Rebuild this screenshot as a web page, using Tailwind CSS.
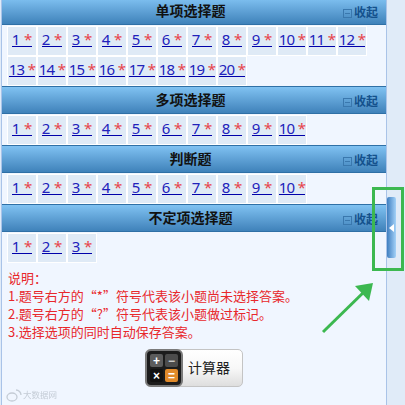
<!DOCTYPE html>
<html lang="zh-CN">
<head>
    <meta charset="UTF-8">
    <title>答题卡</title>
    <script src="https://cdn.jsdelivr.net/npm/@tailwindcss/browser@4"></script>
</head>
<body class="bg-[#e0ebf8] font-['Liberation_Sans','Noto_Sans_CJK_SC',sans-serif]">
<div class="relative w-[405px] h-[405px] overflow-hidden">
    <div class="w-[386px] h-[405px] overflow-hidden border-l border-r border-[#a9c3e8] bg-[#f0f6ff] ml-px">

        <!-- 单项选择题 -->
        <div class="relative -mt-[3px] h-[28px] flex items-center justify-center bg-gradient-to-b from-[#80c2f2] to-[#3f82ba] border-t border-b border-[#2f70a6] pr-[7px]">
            <span class="text-[14px] font-bold text-[#111]">单项选择题</span>
            <span class="absolute right-[8px] top-[6px] flex items-center text-[12px] font-bold text-[#14518c]"><span class="w-[9px] h-[9px] border border-[#3a78ae] mr-[2px] flex items-center justify-center"><span class="w-[5px] h-px bg-[#3a78ae]"></span></span>收起</span>
        </div>
        <div class="flex flex-wrap w-[364px] ml-[5px] mt-px">
            <div class="w-[30px] h-[30px] border border-white bg-[#dfeaf6] flex items-center justify-center text-[15px] font-['Noto_Sans'] text-[#2222bb]"><a class="border-b border-[#0000aa] leading-[14px] h-[15px] mb-[3px] whitespace-nowrap">1 <span class="text-[#e8434a]">*</span></a></div>
            <div class="w-[30px] h-[30px] border border-white bg-[#dfeaf6] flex items-center justify-center text-[15px] font-['Noto_Sans'] text-[#2222bb]"><a class="border-b border-[#0000aa] leading-[14px] h-[15px] mb-[3px] whitespace-nowrap">2 <span class="text-[#e8434a]">*</span></a></div>
            <div class="w-[30px] h-[30px] border border-white bg-[#dfeaf6] flex items-center justify-center text-[15px] font-['Noto_Sans'] text-[#2222bb]"><a class="border-b border-[#0000aa] leading-[14px] h-[15px] mb-[3px] whitespace-nowrap">3 <span class="text-[#e8434a]">*</span></a></div>
            <div class="w-[30px] h-[30px] border border-white bg-[#dfeaf6] flex items-center justify-center text-[15px] font-['Noto_Sans'] text-[#2222bb]"><a class="border-b border-[#0000aa] leading-[14px] h-[15px] mb-[3px] whitespace-nowrap">4 <span class="text-[#e8434a]">*</span></a></div>
            <div class="w-[30px] h-[30px] border border-white bg-[#dfeaf6] flex items-center justify-center text-[15px] font-['Noto_Sans'] text-[#2222bb]"><a class="border-b border-[#0000aa] leading-[14px] h-[15px] mb-[3px] whitespace-nowrap">5 <span class="text-[#e8434a]">*</span></a></div>
            <div class="w-[30px] h-[30px] border border-white bg-[#dfeaf6] flex items-center justify-center text-[15px] font-['Noto_Sans'] text-[#2222bb]"><a class="border-b border-[#0000aa] leading-[14px] h-[15px] mb-[3px] whitespace-nowrap">6 <span class="text-[#e8434a]">*</span></a></div>
            <div class="w-[30px] h-[30px] border border-white bg-[#dfeaf6] flex items-center justify-center text-[15px] font-['Noto_Sans'] text-[#2222bb]"><a class="border-b border-[#0000aa] leading-[14px] h-[15px] mb-[3px] whitespace-nowrap">7 <span class="text-[#e8434a]">*</span></a></div>
            <div class="w-[30px] h-[30px] border border-white bg-[#dfeaf6] flex items-center justify-center text-[15px] font-['Noto_Sans'] text-[#2222bb]"><a class="border-b border-[#0000aa] leading-[14px] h-[15px] mb-[3px] whitespace-nowrap">8 <span class="text-[#e8434a]">*</span></a></div>
            <div class="w-[30px] h-[30px] border border-white bg-[#dfeaf6] flex items-center justify-center text-[15px] font-['Noto_Sans'] text-[#2222bb]"><a class="border-b border-[#0000aa] leading-[14px] h-[15px] mb-[3px] whitespace-nowrap">9 <span class="text-[#e8434a]">*</span></a></div>
            <div class="w-[30px] h-[30px] border border-white bg-[#dfeaf6] flex items-center justify-center text-[15px] font-['Noto_Sans'] text-[#2222bb]"><a class="border-b border-[#0000aa] leading-[14px] h-[15px] mb-[3px] whitespace-nowrap tracking-[-0.7px]">10 <span class="text-[#e8434a]">*</span></a></div>
            <div class="w-[30px] h-[30px] border border-white bg-[#dfeaf6] flex items-center justify-center text-[15px] font-['Noto_Sans'] text-[#2222bb]"><a class="border-b border-[#0000aa] leading-[14px] h-[15px] mb-[3px] whitespace-nowrap tracking-[-0.7px]">11 <span class="text-[#e8434a]">*</span></a></div>
            <div class="w-[30px] h-[30px] border border-white bg-[#dfeaf6] flex items-center justify-center text-[15px] font-['Noto_Sans'] text-[#2222bb]"><a class="border-b border-[#0000aa] leading-[14px] h-[15px] mb-[3px] whitespace-nowrap tracking-[-0.7px]">12 <span class="text-[#e8434a]">*</span></a></div>
            <div class="w-[30px] h-[30px] border border-white bg-[#dfeaf6] flex items-center justify-center text-[15px] font-['Noto_Sans'] text-[#2222bb]"><a class="border-b border-[#0000aa] leading-[14px] h-[15px] mb-[3px] whitespace-nowrap tracking-[-0.7px]">13 <span class="text-[#e8434a]">*</span></a></div>
            <div class="w-[30px] h-[30px] border border-white bg-[#dfeaf6] flex items-center justify-center text-[15px] font-['Noto_Sans'] text-[#2222bb]"><a class="border-b border-[#0000aa] leading-[14px] h-[15px] mb-[3px] whitespace-nowrap tracking-[-0.7px]">14 <span class="text-[#e8434a]">*</span></a></div>
            <div class="w-[30px] h-[30px] border border-white bg-[#dfeaf6] flex items-center justify-center text-[15px] font-['Noto_Sans'] text-[#2222bb]"><a class="border-b border-[#0000aa] leading-[14px] h-[15px] mb-[3px] whitespace-nowrap tracking-[-0.7px]">15 <span class="text-[#e8434a]">*</span></a></div>
            <div class="w-[30px] h-[30px] border border-white bg-[#dfeaf6] flex items-center justify-center text-[15px] font-['Noto_Sans'] text-[#2222bb]"><a class="border-b border-[#0000aa] leading-[14px] h-[15px] mb-[3px] whitespace-nowrap tracking-[-0.7px]">16 <span class="text-[#e8434a]">*</span></a></div>
            <div class="w-[30px] h-[30px] border border-white bg-[#dfeaf6] flex items-center justify-center text-[15px] font-['Noto_Sans'] text-[#2222bb]"><a class="border-b border-[#0000aa] leading-[14px] h-[15px] mb-[3px] whitespace-nowrap tracking-[-0.7px]">17 <span class="text-[#e8434a]">*</span></a></div>
            <div class="w-[30px] h-[30px] border border-white bg-[#dfeaf6] flex items-center justify-center text-[15px] font-['Noto_Sans'] text-[#2222bb]"><a class="border-b border-[#0000aa] leading-[14px] h-[15px] mb-[3px] whitespace-nowrap tracking-[-0.7px]">18 <span class="text-[#e8434a]">*</span></a></div>
            <div class="w-[30px] h-[30px] border border-white bg-[#dfeaf6] flex items-center justify-center text-[15px] font-['Noto_Sans'] text-[#2222bb]"><a class="border-b border-[#0000aa] leading-[14px] h-[15px] mb-[3px] whitespace-nowrap tracking-[-0.7px]">19 <span class="text-[#e8434a]">*</span></a></div>
            <div class="w-[30px] h-[30px] border border-white bg-[#dfeaf6] flex items-center justify-center text-[15px] font-['Noto_Sans'] text-[#2222bb]"><a class="border-b border-[#0000aa] leading-[14px] h-[15px] mb-[3px] whitespace-nowrap tracking-[-0.7px]">20 <span class="text-[#e8434a]">*</span></a></div>
        </div>

        <!-- 多项选择题 -->
        <div class="relative h-[28px] flex items-center justify-center bg-gradient-to-b from-[#80c2f2] to-[#3f82ba] border-t border-b border-[#2f70a6] pr-[7px]">
            <span class="text-[14px] font-bold text-[#111]">多项选择题</span>
            <span class="absolute right-[8px] top-[6px] flex items-center text-[12px] font-bold text-[#14518c]"><span class="w-[9px] h-[9px] border border-[#3a78ae] mr-[2px] flex items-center justify-center"><span class="w-[5px] h-px bg-[#3a78ae]"></span></span>收起</span>
        </div>
        <div class="flex flex-wrap w-[364px] ml-[5px] mt-px">
            <div class="w-[30px] h-[30px] border border-white bg-[#dfeaf6] flex items-center justify-center text-[15px] font-['Noto_Sans'] text-[#2222bb]"><a class="border-b border-[#0000aa] leading-[14px] h-[15px] mb-[3px] whitespace-nowrap">1 <span class="text-[#e8434a]">*</span></a></div>
            <div class="w-[30px] h-[30px] border border-white bg-[#dfeaf6] flex items-center justify-center text-[15px] font-['Noto_Sans'] text-[#2222bb]"><a class="border-b border-[#0000aa] leading-[14px] h-[15px] mb-[3px] whitespace-nowrap">2 <span class="text-[#e8434a]">*</span></a></div>
            <div class="w-[30px] h-[30px] border border-white bg-[#dfeaf6] flex items-center justify-center text-[15px] font-['Noto_Sans'] text-[#2222bb]"><a class="border-b border-[#0000aa] leading-[14px] h-[15px] mb-[3px] whitespace-nowrap">3 <span class="text-[#e8434a]">*</span></a></div>
            <div class="w-[30px] h-[30px] border border-white bg-[#dfeaf6] flex items-center justify-center text-[15px] font-['Noto_Sans'] text-[#2222bb]"><a class="border-b border-[#0000aa] leading-[14px] h-[15px] mb-[3px] whitespace-nowrap">4 <span class="text-[#e8434a]">*</span></a></div>
            <div class="w-[30px] h-[30px] border border-white bg-[#dfeaf6] flex items-center justify-center text-[15px] font-['Noto_Sans'] text-[#2222bb]"><a class="border-b border-[#0000aa] leading-[14px] h-[15px] mb-[3px] whitespace-nowrap">5 <span class="text-[#e8434a]">*</span></a></div>
            <div class="w-[30px] h-[30px] border border-white bg-[#dfeaf6] flex items-center justify-center text-[15px] font-['Noto_Sans'] text-[#2222bb]"><a class="border-b border-[#0000aa] leading-[14px] h-[15px] mb-[3px] whitespace-nowrap">6 <span class="text-[#e8434a]">*</span></a></div>
            <div class="w-[30px] h-[30px] border border-white bg-[#dfeaf6] flex items-center justify-center text-[15px] font-['Noto_Sans'] text-[#2222bb]"><a class="border-b border-[#0000aa] leading-[14px] h-[15px] mb-[3px] whitespace-nowrap">7 <span class="text-[#e8434a]">*</span></a></div>
            <div class="w-[30px] h-[30px] border border-white bg-[#dfeaf6] flex items-center justify-center text-[15px] font-['Noto_Sans'] text-[#2222bb]"><a class="border-b border-[#0000aa] leading-[14px] h-[15px] mb-[3px] whitespace-nowrap">8 <span class="text-[#e8434a]">*</span></a></div>
            <div class="w-[30px] h-[30px] border border-white bg-[#dfeaf6] flex items-center justify-center text-[15px] font-['Noto_Sans'] text-[#2222bb]"><a class="border-b border-[#0000aa] leading-[14px] h-[15px] mb-[3px] whitespace-nowrap">9 <span class="text-[#e8434a]">*</span></a></div>
            <div class="w-[30px] h-[30px] border border-white bg-[#dfeaf6] flex items-center justify-center text-[15px] font-['Noto_Sans'] text-[#2222bb]"><a class="border-b border-[#0000aa] leading-[14px] h-[15px] mb-[3px] whitespace-nowrap tracking-[-0.7px]">10 <span class="text-[#e8434a]">*</span></a></div>
        </div>

        <!-- 判断题 -->
        <div class="relative h-[28px] flex items-center justify-center bg-gradient-to-b from-[#80c2f2] to-[#3f82ba] border-t border-b border-[#2f70a6] pr-[7px]">
            <span class="text-[14px] font-bold text-[#111]">判断题</span>
            <span class="absolute right-[8px] top-[6px] flex items-center text-[12px] font-bold text-[#14518c]"><span class="w-[9px] h-[9px] border border-[#3a78ae] mr-[2px] flex items-center justify-center"><span class="w-[5px] h-px bg-[#3a78ae]"></span></span>收起</span>
        </div>
        <div class="flex flex-wrap w-[364px] ml-[5px] mt-px">
            <div class="w-[30px] h-[30px] border border-white bg-[#dfeaf6] flex items-center justify-center text-[15px] font-['Noto_Sans'] text-[#2222bb]"><a class="border-b border-[#0000aa] leading-[14px] h-[15px] mb-[3px] whitespace-nowrap">1 <span class="text-[#e8434a]">*</span></a></div>
            <div class="w-[30px] h-[30px] border border-white bg-[#dfeaf6] flex items-center justify-center text-[15px] font-['Noto_Sans'] text-[#2222bb]"><a class="border-b border-[#0000aa] leading-[14px] h-[15px] mb-[3px] whitespace-nowrap">2 <span class="text-[#e8434a]">*</span></a></div>
            <div class="w-[30px] h-[30px] border border-white bg-[#dfeaf6] flex items-center justify-center text-[15px] font-['Noto_Sans'] text-[#2222bb]"><a class="border-b border-[#0000aa] leading-[14px] h-[15px] mb-[3px] whitespace-nowrap">3 <span class="text-[#e8434a]">*</span></a></div>
            <div class="w-[30px] h-[30px] border border-white bg-[#dfeaf6] flex items-center justify-center text-[15px] font-['Noto_Sans'] text-[#2222bb]"><a class="border-b border-[#0000aa] leading-[14px] h-[15px] mb-[3px] whitespace-nowrap">4 <span class="text-[#e8434a]">*</span></a></div>
            <div class="w-[30px] h-[30px] border border-white bg-[#dfeaf6] flex items-center justify-center text-[15px] font-['Noto_Sans'] text-[#2222bb]"><a class="border-b border-[#0000aa] leading-[14px] h-[15px] mb-[3px] whitespace-nowrap">5 <span class="text-[#e8434a]">*</span></a></div>
            <div class="w-[30px] h-[30px] border border-white bg-[#dfeaf6] flex items-center justify-center text-[15px] font-['Noto_Sans'] text-[#2222bb]"><a class="border-b border-[#0000aa] leading-[14px] h-[15px] mb-[3px] whitespace-nowrap">6 <span class="text-[#e8434a]">*</span></a></div>
            <div class="w-[30px] h-[30px] border border-white bg-[#dfeaf6] flex items-center justify-center text-[15px] font-['Noto_Sans'] text-[#2222bb]"><a class="border-b border-[#0000aa] leading-[14px] h-[15px] mb-[3px] whitespace-nowrap">7 <span class="text-[#e8434a]">*</span></a></div>
            <div class="w-[30px] h-[30px] border border-white bg-[#dfeaf6] flex items-center justify-center text-[15px] font-['Noto_Sans'] text-[#2222bb]"><a class="border-b border-[#0000aa] leading-[14px] h-[15px] mb-[3px] whitespace-nowrap">8 <span class="text-[#e8434a]">*</span></a></div>
            <div class="w-[30px] h-[30px] border border-white bg-[#dfeaf6] flex items-center justify-center text-[15px] font-['Noto_Sans'] text-[#2222bb]"><a class="border-b border-[#0000aa] leading-[14px] h-[15px] mb-[3px] whitespace-nowrap">9 <span class="text-[#e8434a]">*</span></a></div>
            <div class="w-[30px] h-[30px] border border-white bg-[#dfeaf6] flex items-center justify-center text-[15px] font-['Noto_Sans'] text-[#2222bb]"><a class="border-b border-[#0000aa] leading-[14px] h-[15px] mb-[3px] whitespace-nowrap tracking-[-0.7px]">10 <span class="text-[#e8434a]">*</span></a></div>
        </div>

        <!-- 不定项选择题 -->
        <div class="relative h-[28px] flex items-center justify-center bg-gradient-to-b from-[#80c2f2] to-[#3f82ba] border-t border-b border-[#2f70a6] pr-[7px]">
            <span class="text-[14px] font-bold text-[#111]">不定项选择题</span>
            <span class="absolute right-[8px] top-[6px] flex items-center text-[12px] font-bold text-[#14518c]"><span class="w-[9px] h-[9px] border border-[#3a78ae] mr-[2px] flex items-center justify-center"><span class="w-[5px] h-px bg-[#3a78ae]"></span></span>收起</span>
        </div>
        <div class="flex flex-wrap w-[364px] ml-[5px] mt-px">
            <div class="w-[30px] h-[30px] border border-white bg-[#dfeaf6] flex items-center justify-center text-[15px] font-['Noto_Sans'] text-[#2222bb]"><a class="border-b border-[#0000aa] leading-[14px] h-[15px] mb-[3px] whitespace-nowrap">1 <span class="text-[#e8434a]">*</span></a></div>
            <div class="w-[30px] h-[30px] border border-white bg-[#dfeaf6] flex items-center justify-center text-[15px] font-['Noto_Sans'] text-[#2222bb]"><a class="border-b border-[#0000aa] leading-[14px] h-[15px] mb-[3px] whitespace-nowrap">2 <span class="text-[#e8434a]">*</span></a></div>
            <div class="w-[30px] h-[30px] border border-white bg-[#dfeaf6] flex items-center justify-center text-[15px] font-['Noto_Sans'] text-[#2222bb]"><a class="border-b border-[#0000aa] leading-[14px] h-[15px] mb-[3px] whitespace-nowrap">3 <span class="text-[#e8434a]">*</span></a></div>
        </div>

        <!-- 说明 -->
        <div class="ml-[6px] mt-[6px] text-[13px] leading-[18px] text-[#e8282c] whitespace-nowrap font-['Noto_Sans_CJK_SC','Liberation_Sans',sans-serif]">
            <p>说明：</p>
            <p>1.题号右方的“*”符号代表该小题尚未选择答案。</p>
            <p>2.题号右方的“?”符号代表该小题做过标记。</p>
            <p>3.选择选项的同时自动保存答案。</p>
        </div>

        <!-- 计算器 -->
        <div class="ml-[143px] mt-[8px] w-[98px] h-[38px] flex items-center rounded-[5px] border border-[#c4c4c4] bg-gradient-to-b from-white via-[#f8f8f8] to-[#dedede]">
            <div class="-ml-px w-[38px] h-[38px] shrink-0 rounded-[6px] border-2 border-[#7a7a7a] bg-[#1c1c1c] grid grid-cols-2 gap-[2px] p-[3px]">
                <span class="bg-[#5c5c5c] rounded-[2px] flex items-center justify-center text-white text-[12px] font-bold leading-none">+</span>
                <span class="bg-[#4c4c4c] rounded-[2px] flex items-center justify-center text-[#ccc] text-[12px] font-bold leading-none">−</span>
                <span class="bg-[#111] rounded-[2px] flex items-center justify-center text-white text-[12px] font-bold leading-none">×</span>
                <span class="bg-[#e08a2a] rounded-[2px] flex items-center justify-center text-white text-[12px] font-bold leading-none">=</span>
            </div>
            <span class="ml-[5px] text-[14px] text-[#222]">计算器</span>
        </div>
    </div>

    <!-- 水印 -->
    <div class="absolute left-[6px] top-[389px] flex items-center text-[8.5px] text-[#c4ccd6] blur-[0.4px]">
        <svg width="16" height="13" viewBox="0 0 16 13" fill="none" stroke="#c4ccd6" stroke-width="1.3"><ellipse cx="6" cy="8" rx="5" ry="4"/><path d="M10 1a5 5 0 0 1 5 5"/></svg>
        <span class="ml-[1px]">大数据网</span>
    </div>

    <!-- 折叠手柄 -->
    <div class="absolute left-[387px] top-[197px] w-[9px] h-[61px] rounded-[2px] bg-gradient-to-r from-[#3f7fc0] to-[#a4d2f8] flex items-center justify-center">
        <span class="w-0 h-0 border-y-[4px] border-y-transparent border-r-[5px] border-r-white"></span>
    </div>

    <!-- 标注 -->
    <div class="absolute left-[372px] top-[187px] w-[32px] h-[84px] border-[3px] border-[#3cb850]"></div>
    <svg class="absolute left-0 top-0 pointer-events-none" width="405" height="405" viewBox="0 0 405 405" fill="none">
        <path d="M323 332L368 288" stroke="#3cb850" stroke-width="3"/>
        <path d="M355 286L373 283L369 301Z" fill="#3cb850"/>
    </svg>
</div>
</body>
</html>
